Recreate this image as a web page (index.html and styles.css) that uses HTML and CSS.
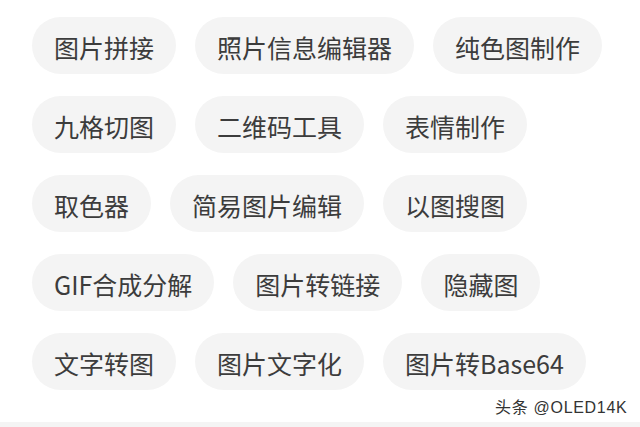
FILE: index.html
```html
<!DOCTYPE html>
<html lang="zh">
<head>
<meta charset="UTF-8">
<meta name="viewport" content="width=device-width, initial-scale=1.0">
<title>图片工具</title>
<link rel="stylesheet" href="styles.css">
</head>
<body>
<div class="工具区">
    <div class="行">
        <span class="标签">图片拼接</span>
        <span class="标签">照片信息编辑器</span>
        <span class="标签">纯色图制作</span>
    </div>
    <div class="行">
        <span class="标签">九格切图</span>
        <span class="标签">二维码工具</span>
        <span class="标签">表情制作</span>
    </div>
    <div class="行">
        <span class="标签">取色器</span>
        <span class="标签">简易图片编辑</span>
        <span class="标签">以图搜图</span>
    </div>
    <div class="行">
        <span class="标签">GIF合成分解</span>
        <span class="标签">图片转链接</span>
        <span class="标签">隐藏图</span>
    </div>
    <div class="行">
        <span class="标签">文字转图</span>
        <span class="标签">图片文字化</span>
        <span class="标签">图片转Base64</span>
    </div>
</div>
<div class="底条"></div>
<p class="水印">头条 @OLED14K</p>
</body>
</html>
```

FILE: styles.css
```css
*{margin:0;padding:0;box-sizing:border-box;}
body
{
    width: 640px;
    height: 427px;
    overflow: hidden;
    background: #fff;
    position: relative;
    font-family: "Noto Sans CJK SC", "Noto Sans", sans-serif;
}
.工具区
{
    padding: 17px 0 0 32px;
    display: flex;
    flex-direction: column;
    gap: 22px;
    height: 422px;
}
.行
{
    display: flex;
    gap: 19px;
}
.标签
{
    display: flex;
    align-items: center;
    height: 57px;
    padding: 2px 22px 0;
    border-radius: 29px;
    background: #f4f4f4;
    color: #3c3c3c;
    font-size: 25px;
    white-space: nowrap;
}
.底条
{
    height: 5px;
    background: #f4f4f4;
}
.水印
{
    position: absolute;
    left: 495px;
    top: 394px;
    font-family: "Liberation Sans", "Noto Sans CJK SC", sans-serif;
    font-size: 16px;
    letter-spacing: 0.7px;
    color: #333;
    text-shadow: 0 0 2px #fff;
}
```
